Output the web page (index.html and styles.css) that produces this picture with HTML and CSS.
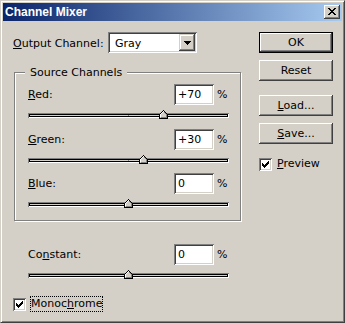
FILE: index.html
```html
<!DOCTYPE html>
<html>
<head>
<meta charset="utf-8">
<title>Channel Mixer</title>
<link rel="stylesheet" href="styles.css">
</head>
<body>
<div class="window">
  <div class="titlebar">
    <span class="title">Channel Mixer</span>
    <span class="close"><svg width="8" height="7" viewBox="0 0 8 7" shape-rendering="crispEdges"><path fill="#000" d="M0 0h2v1H0z M6 0h2v1H6z M1 1h2v1H1z M5 1h2v1H5z M2 2h4v1H2z M3 3h2v1H3z M2 4h4v1H2z M1 5h2v1H1z M5 5h2v1H5z M0 6h2v1H0z M6 6h2v1H6z"/></svg></span>
  </div>
  <div class="content">
    <div class="main">
      <div class="output-row">
        <span class="output-label"><u>O</u>utput Channel:</span>
        <div class="select">
          <span class="select-value">Gray</span>
          <span class="drop"><svg width="7" height="4" viewBox="0 0 7 4" shape-rendering="crispEdges"><path fill="#000" d="M0 0h7v1H0z M1 1h5v1H1z M2 2h3v1H2z M3 3h1v1H3z"/></svg></span>
        </div>
      </div>

      <div class="group">
        <span class="legend">Source Channels</span>
        <div class="channel">
          <div class="ch-row"><span class="ch-label"><u>R</u>ed:</span><span class="field">+70</span><span class="pct">%</span></div>
          <div class="slider"><span class="tick"></span><span class="thumb" style="left:131px"><svg width="9" height="9" viewBox="0 0 9 9" shape-rendering="crispEdges"><path fill="#d4d0c8" d="M4 0h1v1h1v1h1v1h1v1h1v5H0V4h1V3h1V2h1V1h1z"/><path fill="#000" d="M4 0h1v1H4z M3 1h1v1H3z M5 1h1v1H5z M2 2h1v1H2z M6 2h1v1H6z M1 3h1v1H1z M7 3h1v1H7z M0 4h1v5H0z M8 4h1v5H8z M1 8h7v1H1z"/><path fill="#fff" d="M4 1h1v1H4z M3 2h1v1H3z M2 3h1v1H2z M1 4h1v3H1z"/><path fill="#808080" d="M5 2h1v1H5z M6 3h1v1H6z M7 4h1v4H7z M2 7h5v1H2z"/></svg></span></div>
        </div>
        <div class="channel">
          <div class="ch-row"><span class="ch-label"><u>G</u>reen:</span><span class="field">+30</span><span class="pct">%</span></div>
          <div class="slider"><span class="tick"></span><span class="thumb" style="left:111px"><svg width="9" height="9" viewBox="0 0 9 9" shape-rendering="crispEdges"><path fill="#d4d0c8" d="M4 0h1v1h1v1h1v1h1v1h1v5H0V4h1V3h1V2h1V1h1z"/><path fill="#000" d="M4 0h1v1H4z M3 1h1v1H3z M5 1h1v1H5z M2 2h1v1H2z M6 2h1v1H6z M1 3h1v1H1z M7 3h1v1H7z M0 4h1v5H0z M8 4h1v5H8z M1 8h7v1H1z"/><path fill="#fff" d="M4 1h1v1H4z M3 2h1v1H3z M2 3h1v1H2z M1 4h1v3H1z"/><path fill="#808080" d="M5 2h1v1H5z M6 3h1v1H6z M7 4h1v4H7z M2 7h5v1H2z"/></svg></span></div>
        </div>
        <div class="channel">
          <div class="ch-row"><span class="ch-label"><u>B</u>lue:</span><span class="field">0</span><span class="pct">%</span></div>
          <div class="slider"><span class="tick"></span><span class="thumb" style="left:96px"><svg width="9" height="9" viewBox="0 0 9 9" shape-rendering="crispEdges"><path fill="#d4d0c8" d="M4 0h1v1h1v1h1v1h1v1h1v5H0V4h1V3h1V2h1V1h1z"/><path fill="#000" d="M4 0h1v1H4z M3 1h1v1H3z M5 1h1v1H5z M2 2h1v1H2z M6 2h1v1H6z M1 3h1v1H1z M7 3h1v1H7z M0 4h1v5H0z M8 4h1v5H8z M1 8h7v1H1z"/><path fill="#fff" d="M4 1h1v1H4z M3 2h1v1H3z M2 3h1v1H2z M1 4h1v3H1z"/><path fill="#808080" d="M5 2h1v1H5z M6 3h1v1H6z M7 4h1v4H7z M2 7h5v1H2z"/></svg></span></div>
        </div>
      </div>

      <div class="channel constant">
        <div class="ch-row"><span class="ch-label">Co<u>n</u>stant:</span><span class="field">0</span><span class="pct">%</span></div>
        <div class="slider"><span class="tick"></span><span class="thumb" style="left:96px"><svg width="9" height="9" viewBox="0 0 9 9" shape-rendering="crispEdges"><path fill="#d4d0c8" d="M4 0h1v1h1v1h1v1h1v1h1v5H0V4h1V3h1V2h1V1h1z"/><path fill="#000" d="M4 0h1v1H4z M3 1h1v1H3z M5 1h1v1H5z M2 2h1v1H2z M6 2h1v1H6z M1 3h1v1H1z M7 3h1v1H7z M0 4h1v5H0z M8 4h1v5H8z M1 8h7v1H1z"/><path fill="#fff" d="M4 1h1v1H4z M3 2h1v1H3z M2 3h1v1H2z M1 4h1v3H1z"/><path fill="#808080" d="M5 2h1v1H5z M6 3h1v1H6z M7 4h1v4H7z M2 7h5v1H2z"/></svg></span></div>
      </div>

      <div class="checkrow mono">
        <span class="checkbox"><svg width="7" height="7" viewBox="0 0 7 7" shape-rendering="crispEdges"><path fill="#000" d="M0 2h1v3H0z M1 3h1v3H1z M2 4h1v3H2z M3 3h1v3H3z M4 2h1v3H4z M5 1h1v3H5z M6 0h1v3H6z"/></svg></span>
        <span class="check-label focus">Monoc<u>h</u>rome</span>
      </div>
    </div>

    <div class="side">
      <button class="btn default">OK</button>
      <button class="btn reset">Reset</button>
      <button class="btn load"><u>L</u>oad...</button>
      <button class="btn save"><u>S</u>ave...</button>
      <div class="checkrow preview">
        <span class="checkbox"><svg width="7" height="7" viewBox="0 0 7 7" shape-rendering="crispEdges"><path fill="#000" d="M0 2h1v3H0z M1 3h1v3H1z M2 4h1v3H2z M3 3h1v3H3z M4 2h1v3H4z M5 1h1v3H5z M6 0h1v3H6z"/></svg></span>
        <span class="check-label"><u>P</u>review</span>
      </div>
    </div>
  </div>
</div>
</body>
</html>
```

FILE: styles.css
```css
* { box-sizing: border-box; }

body {
  margin: 0;
  background: #d4d0c8;
  font-family: "DejaVu Sans", sans-serif;
  font-size: 11px;
  color: #000;
}

u { text-decoration: underline; text-underline-offset: 1px; }

.window {
  width: 345px;
  height: 323px;
  background: #d4d0c8;
  border: 1px solid;
  border-color: #d4d0c8 #404040 #404040 #d4d0c8;
  box-shadow: inset 1px 1px #fff, inset -1px -1px #808080;
  padding: 2px;
}

.titlebar {
  height: 18px;
  background: linear-gradient(to right, #0a246a, #a6caf0);
  display: flex;
  align-items: center;
  justify-content: space-between;
  padding: 0 2px 0 2px;
}

.title {
  color: #fff;
  font: bold 12px "Liberation Sans", sans-serif;
  line-height: 14px;
}

.close {
  width: 16px;
  height: 14px;
  background: #d4d0c8;
  box-shadow: inset -1px -1px #404040, inset 1px 1px #fff, inset -2px -2px #808080;
  display: flex;
  align-items: center;
  justify-content: center;
  padding-bottom: 1px;
}
.close svg { display: block; }

.content {
  display: flex;
  padding: 11px 0 0 10px;
}

.main { width: 228px; }

.output-row {
  display: flex;
  align-items: baseline;
  height: 21px;
}

.output-label { width: 95px; }

/* sunken 3D field */
.select, .field, .checkbox {
  background: #fff;
  box-shadow: inset 1px 1px #808080, inset -1px -1px #fff, inset 2px 2px #404040, inset -2px -2px #d4d0c8;
}

.select {
  width: 89px;
  height: 21px;
  padding: 2px;
  display: flex;
  align-items: flex-start;
}

.select-value {
  padding: 3px 0 0 5px;
  line-height: 13px;
}

.drop {
  margin-left: auto;
  width: 16px;
  height: 17px;
  background: #d4d0c8;
  box-shadow: inset -1px -1px #404040, inset 1px 1px #d4d0c8, inset -2px -2px #808080, inset 2px 2px #fff;
  display: flex;
  align-items: center;
  justify-content: center;
}
.drop svg { display: block; }

.group {
  position: relative;
  margin: 19px 0 0 1px;
  width: 227px;
  border: 1px solid #808080;
  box-shadow: inset 1px 1px #fff, 1px 1px #fff;
  padding: 11px 11px 13px 13px;
}

.legend {
  position: absolute;
  top: -7px;
  left: 10px;
  padding: 0 5px;
  background: #d4d0c8;
  line-height: 13px;
}

.channel { width: 201px; }
.channel + .channel { margin-top: 10.5px; }

.ch-row {
  display: flex;
  align-items: baseline;
  height: 21px;
}

.ch-label { width: 146px; }

.field {
  width: 40px;
  height: 21px;
  padding: 2px 2px 2px 4px;
  line-height: 17px;
}

.pct { margin-left: 3px; }

.slider {
  position: relative;
  height: 5px;
  margin-top: 8px;
  background: #d4d0c8;
  box-shadow: inset 1px 1px #808080, inset -1px -1px #fff, inset 2px 2px #000, inset -2px -2px #000;
}

.tick {
  position: absolute;
  left: 100px;
  top: 2px;
  width: 1px;
  height: 1px;
  background: #808080;
}

.thumb {
  position: absolute;
  top: -3px;
  width: 9px;
  height: 9px;
}
.thumb svg { display: block; }

.constant { margin: 23px 0 0 15px; }

.checkrow {
  display: flex;
  align-items: flex-start;
  height: 16px;
}

.checkbox {
  width: 13px;
  height: 13px;
  margin-top: 2px;
  display: flex;
  align-items: center;
  justify-content: center;
}
.checkbox svg { display: block; }

.check-label {
  margin-left: 4px;
  border: 1px solid transparent;
  line-height: 14px;
}

.focus { border: 1px dotted #000; }

.mono { margin-top: 18px; margin-left: 0; }

.side {
  margin-left: 18px;
  width: 74px;
  display: flex;
  flex-direction: column;
}

.btn {
  width: 74px;
  height: 21px;
  border: 0;
  padding: 0;
  background: #d4d0c8;
  font: 11px "DejaVu Sans", sans-serif;
  color: #000;
  box-shadow: inset -1px -1px #404040, inset 1px 1px #fff, inset -2px -2px #808080, inset 2px 2px #d4d0c8;
}

.btn.default {
  box-shadow: inset 0 0 0 1px #000, inset -2px -2px #404040, inset 2px 2px #fff, inset -3px -3px #808080;
}

.reset { margin-top: 7px; }
.load { margin-top: 14px; }
.save { margin-top: 7px; }
.preview { margin-top: 12px; }
```
